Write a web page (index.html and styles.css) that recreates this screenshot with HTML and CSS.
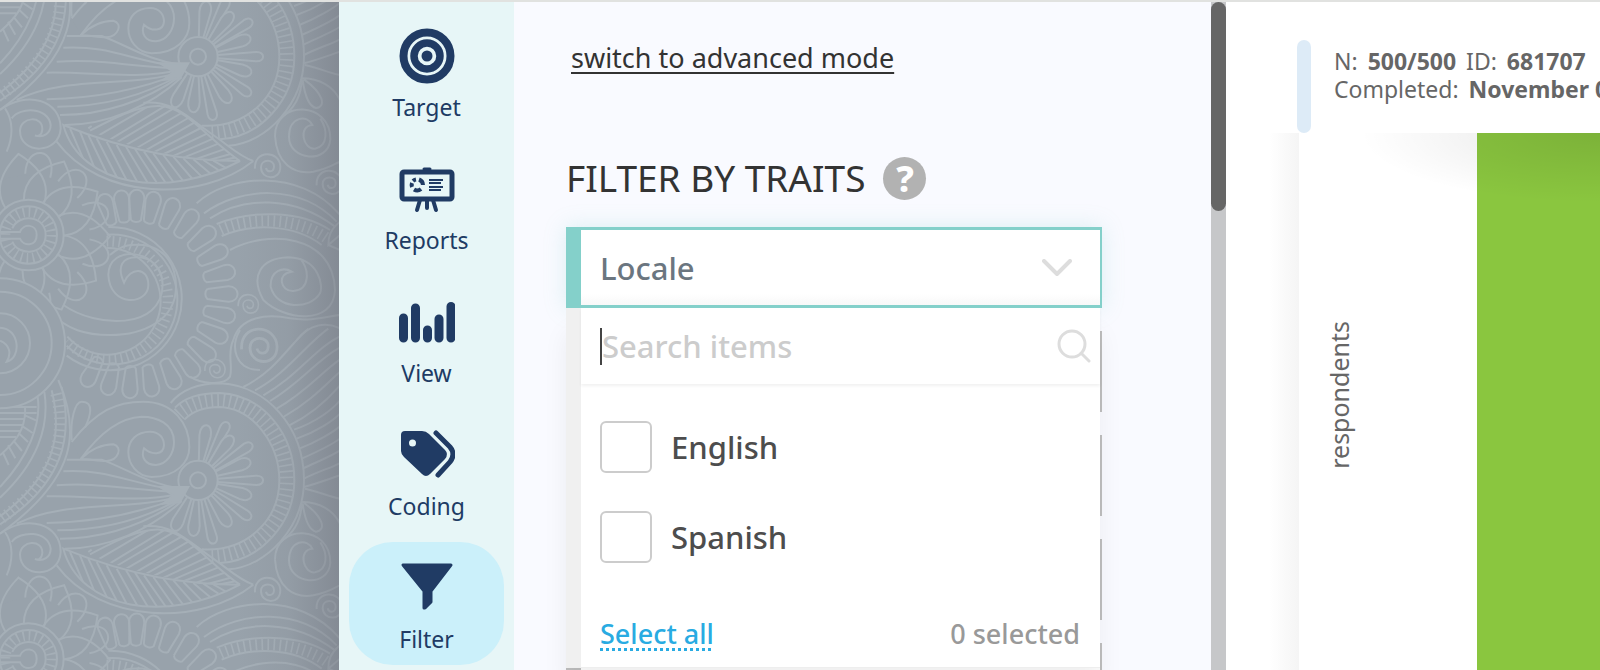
FILE: index.html
```
<!DOCTYPE html>
<html lang="en">

<head>
    <meta charset="UTF-8">
    <meta name="viewport" content="width=device-width, initial-scale=1.0">
    <title>Filter by Traits</title>
    <link rel="stylesheet" href="styles.css">
</head>

<body>

    <div class="app">

        <!-- Paisley wallpaper -->
        <div class="wallpaper">
            <svg viewBox="0 6 1017 2004" preserveAspectRatio="xMinYMin slice" aria-hidden="true">
                <defs>
                    <path id="petal" d="M-7 -60 L-17 -135 C-20 -178 20 -178 17 -135 L7 -60"/>
                    <path id="longPetal" d="M-5 -60 L-14 -175 C-15 -202 15 -202 14 -175 L5 -60"/>
                    <path id="lotusPetal" d="M-58 -88 C-88 -150 -50 -205 0 -245 C50 -205 88 -150 58 -88"/>
                    <path id="roundPetal" d="M-38 -180 C-48 -272 48 -272 38 -180"/>
                    <path id="scallop" d="M-15 -222 L-23 -285 C-24 -322 24 -322 23 -285 L15 -222 C8 -214 -8 -214 -15 -222"/>
                    <path id="curl" d="M-38 6 C-42 -52 36 -50 38 0 C38 44 -20 40 -20 2 C-20 -24 20 -24 19 0 C18 18 -2 18 -5 4"/>
                    <path id="spiral" d="M-98 -10 C-98 -120 70 -115 68 0 C62 75 -56 65 -56 -8 C-56 -70 0 -75 14 -43 C-30 -40 -14 32 22 28 C62 20 60 -30 38 -62"/>
                    <clipPath id="leafTop"><path d="M265 390 C350 350 420 315 480 318 C560 320 630 425 720 483 C560 480 400 450 265 390Z"/></clipPath>
                    <clipPath id="leafBottom"><path d="M190 375 C400 460 560 482 720 483 C500 600 240 560 190 375Z"/></clipPath>
                    <g id="tile">
                        <!-- stripes behind the ring -->
                        <path d="M730 -110 C830 -160 870 -240 925 -285 M765 -100 C860 -150 920 -240 985 -285 M790 -85 C890 -140 950 -230 1020 -262 M810 -68 C900 -120 960 -200 1020 -228 M830 -45 C920 -95 970 -160 1020 -192 M850 -20 C930 -65 980 -120 1020 -156 M868 5 C940 -30 990 -80 1020 -115 M882 18 C950 -5 1000 -45 1020 -70 M890 45 C950 25 1000 -10 1020 -30 M898 75 C950 55 1000 25 1020 8 M905 105 C950 85 1000 60 1020 45 M908 135 C950 115 1000 95 1020 80 M912 165 C950 145 1000 130 1020 118 M912 190 C950 180 990 165 1020 155"/>
                        <path d="M915 195 C960 205 990 220 1020 225 M905 235 C960 235 1000 260 1020 300 M908 240 C915 290 930 320 948 324 C980 320 970 280 912 238 M905 235 C905 290 880 330 840 355"/>
                        <!-- arcs on the left edge -->
                        <path d="M175 -131 C240 20 235 160 0 330 M155 -100 C190 40 160 160 0 278 M185 -110 C220 40 190 180 0 302 M133 -95 C150 10 110 120 0 222 M113 -80 C125 0 85 100 0 190"/>
                        <path class="teeth" stroke-width="34" d="M168 -90 C200 40 170 170 -6 292"/>
                        <path d="M75 -50 C80 20 40 60 0 95 M0 -50 L110 -50 M0 -32 L110 -32 M0 -14 L75 -14 M0 4 L68 4 M0 22 L60 22 M0 40 L48 40 M75 -25 L108 -10 M68 8 L98 28 M58 30 L84 55 M40 50 L66 82 M24 65 L46 104 M8 85 L26 124"/>
                        <!-- ring with the daisy -->
                        <path class="solid" d="M515 -66 C560 -125 640 -121 660 -121 C800 -115 912 10 912 170 C912 310 800 437 690 437 L610 380 L520 315Z" stroke="none"/>
                        <path d="M512 -62 C560 -120 630 -121 660 -121 C800 -115 912 10 912 170 C912 310 800 430 685 437 M525 -48 C560 -85 620 -92 660 -92 C790 -85 883 30 883 170 C883 300 780 412 660 418 M553 -12 C580 -40 620 -50 660 -50 C760 -45 838 60 838 170 C838 290 740 385 605 377"/>
                        <path class="teeth" stroke-width="42" d="M536 -28 C570 -62 620 -71 660 -71 C775 -65 860 45 860 170 C860 295 760 398 625 397"/>
                        <g transform="translate(594 170)">
                            <use href="#petal" transform="rotate(9)"/>
                            <use href="#longPetal" transform="rotate(27)"/>
                            <use href="#petal" class="solid" transform="rotate(38)"/>
                            <use href="#longPetal" transform="rotate(56)"/>
                            <use href="#petal" class="solid" transform="rotate(70)"/>
                            <use href="#longPetal" transform="rotate(90)"/>
                            <use href="#petal" transform="rotate(107)"/>
                            <use href="#longPetal" transform="rotate(126)"/>
                            <use href="#petal" class="solid" transform="rotate(145)"/>
                            <use href="#longPetal" transform="rotate(166)"/>
                            <use href="#petal" transform="rotate(185)"/>
                            <use href="#petal" transform="rotate(206)"/>
                            <circle class="solid" r="59"/>
                            <circle r="24"/>
                        </g>
                        <!-- upper swirl and buds -->
                        <path class="solid" d="M215 55 C290 -40 350 -66 430 -66 C520 -66 568 0 568 70 C568 115 530 160 455 160 C410 158 385 120 385 85 C385 50 410 24 450 24 C480 24 492 45 492 65 C490 95 455 95 432 74 C422 100 435 124 468 124 C500 122 522 90 522 55 C522 0 470 -21 425 -21 C350 -18 290 40 242 106"/>
                        <path d="M215 50 C210 -10 225 -66 245 -66 C285 -66 270 -20 255 12 M242 106 C280 70 310 62 340 62 C370 70 355 110 320 112 C290 112 270 106 242 106"/>
                        <!-- brush of lines -->
                        <path d="M200 108 L305 108 C380 135 440 180 545 195 M190 143 C330 135 400 185 540 200 M170 185 C300 175 380 200 540 205 M140 218 C280 215 400 240 540 210 M50 300 C200 225 400 265 545 215 M140 298 C280 295 420 270 545 218 M172 320 C300 320 430 290 545 222 M180 345 C320 345 440 300 545 226 M195 375 C320 375 450 320 545 232 M265 385 L275 378"/>
                        <path class="tip" d="M480 190 L565 190 L540 235 L490 240 L520 215Z"/>
                        <!-- leaf -->
                        <path d="M190 375 C400 460 560 482 720 483 C500 600 240 560 190 375Z M270 392 C350 350 420 315 480 318 C560 320 630 425 720 483 M170 425 C300 600 600 610 760 483 M430 308 C520 300 560 350 640 405 C690 440 720 470 760 483"/>
                        <g clip-path="url(#leafTop)">
                            <path d="M290 410 L460 310 M320 425 L500 315 M345 430 L530 320 M370 440 L560 330 M400 450 L580 345 M430 455 L600 358 M455 460 L620 375 M485 465 L640 392 M515 470 L660 407 M545 475 L670 425 M580 480 L680 445 M620 482 L700 460 M650 484 L710 472"/>
                        </g>
                        <g clip-path="url(#leafBottom)">
                            <path d="M210 385 L260 500 M240 395 L290 520 M265 405 L330 540 M290 415 L360 550 M320 425 L390 560 M350 435 L420 560 M378 440 L450 560 M405 447 L478 560 M432 455 L505 560 M460 460 L530 560 M490 465 L555 550 M520 470 L580 540 M550 475 L605 530 M580 478 L630 520 M610 480 L655 510 M640 482 L680 505"/>
                        </g>
                        <!-- left curl -->
                        <path d="M0 330 C80 270 182 300 182 385 C178 465 60 465 60 392 C62 350 128 345 127 388 C125 408 112 410 105 406 C130 415 152 400 152 375 C145 320 60 320 35 355 M15 325 C40 360 40 410 20 455"/>
                        <!-- lotus -->
                        <g transform="translate(85 705)">
                            <use href="#roundPetal" transform="rotate(9)"/>
                            <use href="#roundPetal" transform="rotate(41)"/>
                            <use href="#roundPetal" transform="rotate(73)"/>
                            <use href="#roundPetal" transform="rotate(106)"/>
                            <use href="#roundPetal" transform="rotate(139)"/>
                            <use href="#roundPetal" transform="rotate(172)"/>
                            <circle class="solid" r="180" stroke="none"/>
                            <use href="#lotusPetal" transform="rotate(-7)"/>
                            <use href="#lotusPetal" transform="rotate(26)"/>
                            <use href="#lotusPetal" transform="rotate(58)"/>
                            <use href="#lotusPetal" transform="rotate(91)"/>
                            <use href="#lotusPetal" transform="rotate(124)"/>
                            <use href="#lotusPetal" transform="rotate(156)"/>
                            <use href="#lotusPetal" transform="rotate(189)"/>
                            <circle class="solid" r="106"/>
                            <circle r="86"/>
                            <circle class="teeth" r="69" stroke-width="30"/>
                            <path d="M-85 -9 L-25 -9 C-15 -35 25 -35 25 0 C25 35 -15 35 -25 11 L-85 11 M-48 -20 C-30 -65 52 -60 52 0 C52 60 -30 65 -48 20"/>
                        </g>
                        <!-- scalloped wheel -->
                        <g transform="translate(400 882)">
                            <use href="#scallop" transform="rotate(-17)"/>
                            <use href="#scallop" transform="rotate(-7)"/>
                            <use href="#scallop" transform="rotate(2)"/>
                            <use href="#scallop" transform="rotate(12)"/>
                            <use href="#scallop" transform="rotate(24)"/>
                            <use href="#scallop" transform="rotate(37)"/>
                            <use href="#scallop" transform="rotate(51)"/>
                            <use href="#scallop" transform="rotate(64)"/>
                            <use href="#scallop" transform="rotate(77)"/>
                            <use href="#scallop" transform="rotate(90)"/>
                            <use href="#scallop" transform="rotate(103)"/>
                            <use href="#scallop" transform="rotate(116)"/>
                            <use href="#scallop" transform="rotate(129)"/>
                            <use href="#scallop" transform="rotate(142)"/>
                            <use href="#scallop" transform="rotate(155)"/>
                            <use href="#scallop" transform="rotate(169)"/>
                            <use href="#scallop" transform="rotate(182)"/>
                            <use href="#scallop" transform="rotate(195)"/>
                            <use href="#scallop" transform="rotate(208)"/>
                            <path d="M-75 -201 A215 215 0 1 1 -200 185 M-80 -178 A195 195 0 1 1 -200 155 M-80 -138 A160 160 0 1 1 -198 128"/>
                            <path class="teeth" stroke-width="32" d="M-80 -158 A177 177 0 1 1 -200 142"/>
                        </g>
                        <path d="M330 765 C370 730 400 733 430 735 C500 745 528 800 528 860 C528 960 430 1005 330 1005 C260 1005 200 990 150 935 M190 915 C290 985 485 990 488 855 C485 745 325 730 325 825 C330 925 445 915 445 855 C445 800 390 800 372 848 C350 800 365 770 415 772 C450 772 488 800 488 855"/>
                        <!-- bands on the right -->
                        <path d="M590 610 C680 525 900 500 1020 645 M612 640 C720 560 900 550 1010 665 M630 655 C730 590 880 585 1005 680 M650 672 C750 630 900 630 990 690 M665 708 C750 670 880 670 965 735 M690 750 C800 690 1000 700 1005 870 C1000 980 850 960 790 900 C750 830 780 775 865 772 C960 775 970 860 960 880 C930 930 830 930 812 860 C810 810 850 800 875 815 C830 820 840 875 880 873 C930 870 930 810 900 775"/>
                        <path class="teeth" stroke-width="34" d="M662 690 C750 650 890 650 980 714"/>
                        <path d="M1020 665 C990 690 985 710 985 735 L1020 705 M985 735 L1020 750"/>
                        <path d="M700 1020 C720 950 800 940 870 955 C930 965 980 950 1020 945 M890 1020 C930 970 980 965 1020 985"/>
                        <use href="#spiral" transform="translate(923 418)"/>
                        <path d="M825 408 C830 490 880 525 940 515 C990 505 1005 490 1020 485"/>
                        <use href="#curl" transform="translate(803 500)"/>
                        <use href="#curl" transform="translate(988 550)"/>
                        <use href="#curl" transform="translate(745 914) scale(.8)"/>
                        <use href="#curl" transform="translate(778 1040) scale(1.4)"/>
                        <use href="#curl" transform="translate(645 1108) scale(.8)"/>
                        <path d="M700 1020 C680 1060 700 1100 690 1130 C670 1160 600 1150 570 1130 M720 990 C690 1040 705 1110 780 1110"/>
                        <!-- corner rings -->
                        <g transform="translate(0 1030)">
                            <circle class="solid" r="195"/>
                            <circle r="155"/>
                            <circle r="90"/>
                            <path d="M0 -47 C60 -45 65 45 20 55 C35 30 30 5 0 -8"/>
                        </g>
                    </g>
                </defs>
                <use href="#tile" class="lines" y="-1271"/>
                <use href="#tile" class="lines" y="1271"/>
                <use href="#tile" class="lines"/>
            </svg>
        </div>

        <nav class="sidebar">
            <a href="#target" class="nav-item">
                <svg viewBox="0 0 56 56" aria-hidden="true">
                    <circle cx="28" cy="28" r="23.500" fill="none" stroke="currentColor" stroke-width="8"/>
                    <circle cx="28" cy="28" r="13" fill="none" stroke="currentColor" stroke-width="7.500"/>
                    <circle cx="28" cy="28" r="5.500" fill="currentColor"/>
                </svg>
                <span>Target</span>
            </a>
            <a href="#reports" class="nav-item">
                <svg viewBox="0 0 56 56" aria-hidden="true" fill="none" stroke="currentColor">
                    <rect x="3" y="11" width="50" height="27" rx="2" stroke-width="5"/>
                    <path d="M25 8H31" stroke-width="3" stroke-linecap="round"/>
                    <path d="M21 39L18 49M28 39V47M34 39L37 49" stroke-width="4" stroke-linecap="round"/>
                    <path d="M20 18.500A6 6 0 0 1 24 24M22 28A6 6 0 0 1 15 28.500M13 26A6 6 0 0 1 13 22M14 20A6 6 0 0 1 17 18.500" stroke-width="4"/>
                    <path d="M30 19H44M30 22H42M30 26H44M30 29H42" stroke-width="2"/>
                </svg>
                <span>Reports</span>
            </a>
            <a href="#view" class="nav-item">
                <svg viewBox="0 0 56 56" aria-hidden="true">
                    <path d="M4.500 24V44M16.500 14V44M28.500 36V44M40 25V44M52 12.500V44" fill="none" stroke="currentColor" stroke-width="9" stroke-linecap="round"/>
                </svg>
                <span>View</span>
            </a>
            <a href="#coding" class="nav-item">
                <svg viewBox="0 0 56 56" aria-hidden="true">
                    <path fill="currentColor" fill-rule="evenodd" d="M2 8Q2 4 6 4H23Q27 4 30 7L46 23Q50 27 46 32L31 47Q27 51 23 47L5 30Q2 27 2 24ZM13.500 12.500a3.500 3.500 0 1 0 0 7 3.500 3.500 0 0 0 0-7Z"/>
                    <path d="M37 6L51 20Q57 27 51 35L39 48" fill="none" stroke="currentColor" stroke-width="5" stroke-linecap="round"/>
                </svg>
                <span>Coding</span>
            </a>
            <a href="#filter" class="nav-item active">
                <svg viewBox="0 0 56 56" aria-hidden="true">
                    <path fill="currentColor" stroke="currentColor" stroke-width="3" stroke-linejoin="round" d="M4 5H52L32 31V42L26 48H25V31Z"/>
                </svg>
                <span>Filter</span>
            </a>
        </nav>

        <main class="panel">
            <div class="panel-content">
                <a href="#advanced" class="mode-link">switch to advanced mode</a>

                <div class="section-title">
                    <h1>FILTER BY TRAITS</h1>
                    <button type="button" class="help">?</button>
                </div>

                <div class="traits">
                    <div class="trait open">
                        <button type="button" class="trait-toggle" aria-expanded="true">
                            <span>Locale</span>
                            <svg class="chevron" viewBox="0 0 30 18" aria-hidden="true">
                                <path d="M2 2L15 15L28 2" fill="none" stroke="currentColor" stroke-width="4" stroke-linecap="round" stroke-linejoin="round"/>
                            </svg>
                        </button>

                        <div class="dropdown">
                            <div class="search">
                                <input type="text" placeholder="Search items" aria-label="Search items">
                                <svg viewBox="0 0 34 34" aria-hidden="true">
                                    <path d="M15 2a13 13 0 1 0 0 26 13 13 0 0 0 0-26ZM24 24L32 32" fill="none" stroke="currentColor" stroke-width="3" stroke-linecap="round"/>
                                </svg>
                            </div>
                            <div class="options">
                                <label class="option"><input type="checkbox"> English</label>
                                <label class="option"><input type="checkbox"> Spanish</label>
                            </div>
                            <div class="dropdown-footer">
                                <a href="#all">Select all</a>
                                <span>0 selected</span>
                            </div>
                        </div>
                    </div>
                    <div class="trait"></div>
                    <div class="trait"></div>
                    <div class="trait"></div>
                    <div class="trait"></div>
                </div>
            </div>
            <div class="scrollbar">
                <div class="thumb"></div>
            </div>
        </main>

        <section class="results">
            <header class="study-info">
                <p>N: <b>500/500</b> ID: <b>681707</b></p>
                <p>Completed: <b>November 0</b></p>
            </header>
            <div class="chart">
                <div class="axis"><span>respondents</span></div>
                <div class="bar"></div>
            </div>
        </section>

    </div>

</body>

</html>
```
FILE: styles.css
```
* {
    margin: 0;
    padding: 0;
    box-sizing: border-box;
    font-family: "Noto Sans", "Open Sans", sans-serif;
}

body {
    height: 100vh;
    overflow: hidden;
    background: #fff;
}

.app {
    display: flex;
    height: 100vh;
    border-top: 2px solid #e1e2e0;
    overflow: hidden;
}

/* Wallpaper */
.wallpaper {
    position: relative;
    flex: 0 0 339px;
    background: #98a2ab;
    overflow: hidden;
}

.wallpaper svg {
    display: block;
    width: 100%;
    height: 100%;
}

.wallpaper::after {
    content: "";
    position: absolute;
    inset: 0;
    background: linear-gradient(to right, transparent 70%, rgba(90, 90, 100, 0.08) 85%, rgba(90, 90, 100, 0.32));
}

.lines {
    fill: none;
    stroke: #a5afb7;
    stroke-width: 6px;
}

.solid {
    fill: #98a2ab;
}

.tip {
    fill: #a5afb7;
}

.teeth {
    stroke-dasharray: 5 13;
}

/* Sidebar */
.sidebar {
    flex: 0 0 175px;
    display: flex;
    flex-direction: column;
    gap: 10px;
    padding: 8px 10px;
    background: #e7f6f7;
}

.nav-item {
    flex: 0 0 123px;
    display: flex;
    flex-direction: column;
    align-items: center;
    gap: 7px;
    padding-top: 18px;
    border-radius: 44px;
    color: #203b64;
    font-size: 23px;
    line-height: 32px;
    text-decoration: none;
}

.nav-item svg {
    width: 56px;
    height: 56px;
}

.nav-item.active {
    background: #cbf0fa;
}

/* Filter panel */
.panel {
    flex: 0 0 712px;
    display: flex;
    background: #f9faff;
}

.panel-content {
    flex: 1;
    padding: 36px 109px 0 52px;
}

.mode-link {
    display: block;
    width: max-content;
    margin-left: 5px;
    color: #333;
    font-size: 27px;
    line-height: 40px;
    text-underline-offset: 4px;
    text-decoration-thickness: 2px;
}

.section-title {
    display: flex;
    align-items: center;
    gap: 18px;
    margin: 77px 0 26px;
}

h1 {
    color: #333;
    font-size: 37px;
    font-weight: 400;
    line-height: 46px;
    white-space: nowrap;
}

.help {
    width: 43px;
    height: 43px;
    border: none;
    border-radius: 50%;
    background: #b2b2b2;
    color: #fff;
    font-size: 36px;
    font-weight: 800;
    line-height: 43px;
}

.traits {
    display: flex;
    flex-direction: column;
    gap: 23px;
}

.trait {
    position: relative;
    height: 81px;
    border: 2px solid #bfbfbf;
    border-left-width: 15px;
    background: #fff;
}

.trait.open {
    z-index: 1;
    border-color: #84d0ca;
    border-top-width: 3px;
    border-bottom-width: 3px;
    box-shadow: 0 0 20px rgba(132, 208, 202, 0.25);
}

.trait-toggle {
    display: flex;
    align-items: center;
    justify-content: space-between;
    width: 100%;
    height: 100%;
    padding: 0 28px 0 19px;
    border: none;
    background: linear-gradient(to bottom, #fff 85%, #f8f8f8);
    color: #6b7680;
    font-size: 31px;
    font-weight: 500;
    line-height: 44px;
}

.chevron {
    width: 30px;
    height: 18px;
    color: #ddd;
}

.dropdown {
    position: absolute;
    top: 78px;
    left: -15px;
    right: 0;
    border-left: 15px solid #f0f0f0;
    border-bottom: 1px solid #eee;
    background: #fff;
    box-shadow: 0 24px 24px rgba(0, 0, 0, 0.06);
}

.search {
    display: flex;
    align-items: center;
    height: 76px;
    padding: 0 9px 0 19px;
    box-shadow: 0 2px 3px rgba(0, 0, 0, 0.06);
}

.search input {
    flex: 1;
    min-width: 0;
    height: 37px;
    border: none;
    border-left: 2px solid #444;
    outline: none;
    color: #4d4d4d;
    font-size: 31px;
    font-weight: 500;
}

.search input::placeholder {
    color: #ccc;
}

.search svg {
    width: 34px;
    height: 34px;
    color: #ddd;
}

.options {
    display: flex;
    flex-direction: column;
    gap: 38px;
    padding: 37px 19px 0;
}

.option {
    display: flex;
    align-items: center;
    gap: 19px;
    color: #4d4d4d;
    font-size: 31px;
    font-weight: 500;
    line-height: 52px;
}

.option input {
    appearance: none;
    width: 52px;
    height: 52px;
    border: 2px solid #ccc;
    border-radius: 6px;
    background: #fff;
}

.dropdown-footer {
    display: flex;
    justify-content: space-between;
    padding: 51px 20px 13px 19px;
    color: #999;
    font-size: 27px;
    font-weight: 500;
    line-height: 40px;
}

.dropdown-footer a {
    color: #29abe2;
    text-decoration: underline dotted 3px;
    text-underline-offset: 4px;
    text-decoration-skip-ink: none;
}

.scrollbar {
    flex: 0 0 15px;
    background: #c6c7c9;
}

.thumb {
    height: 209px;
    border-radius: 8px;
    background: #666;
}

/* Results */
.results {
    flex: 1;
    min-width: 0;
    display: flex;
    flex-direction: column;
    padding-left: 71px;
    background: #fff;
}

.study-info {
    position: relative;
    margin-top: 38px;
    padding: 7px 0 30px 37px;
    overflow: hidden;
    color: #666;
    font-size: 23px;
    line-height: 28px;
    white-space: nowrap;
}

.study-info::before {
    content: "";
    position: absolute;
    inset: 0 auto 0 0;
    width: 14px;
    border-radius: 7px;
    background: #ddebf7;
}

.study-info b {
    margin: 0 4px;
}

.chart {
    position: relative;
    flex: 1;
    display: flex;
    border-left: 2px solid #e0e0e0;
}

/* soft edge left of the axis */
.chart::before {
    content: "";
    position: absolute;
    inset: 0 100% 0 auto;
    width: 30px;
    background: linear-gradient(to left, #f5f5f5, #fff);
}

/* shade cast by the header */
.chart::after {
    content: "";
    position: absolute;
    inset: 0 0 auto 40px;
    height: 70px;
    background: radial-gradient(ellipse 240px 70px at 100% 0, rgba(0, 0, 0, 0.1), transparent);
}

.axis {
    flex: 0 0 178px;
    padding: 188px 0 0 22px;
}

.axis span {
    display: block;
    writing-mode: vertical-rl;
    transform: rotate(180deg);
    color: #666;
    font-size: 25px;
    line-height: 36px;
}

.bar {
    flex: 1;
    background: #8ac63f;
}
```
